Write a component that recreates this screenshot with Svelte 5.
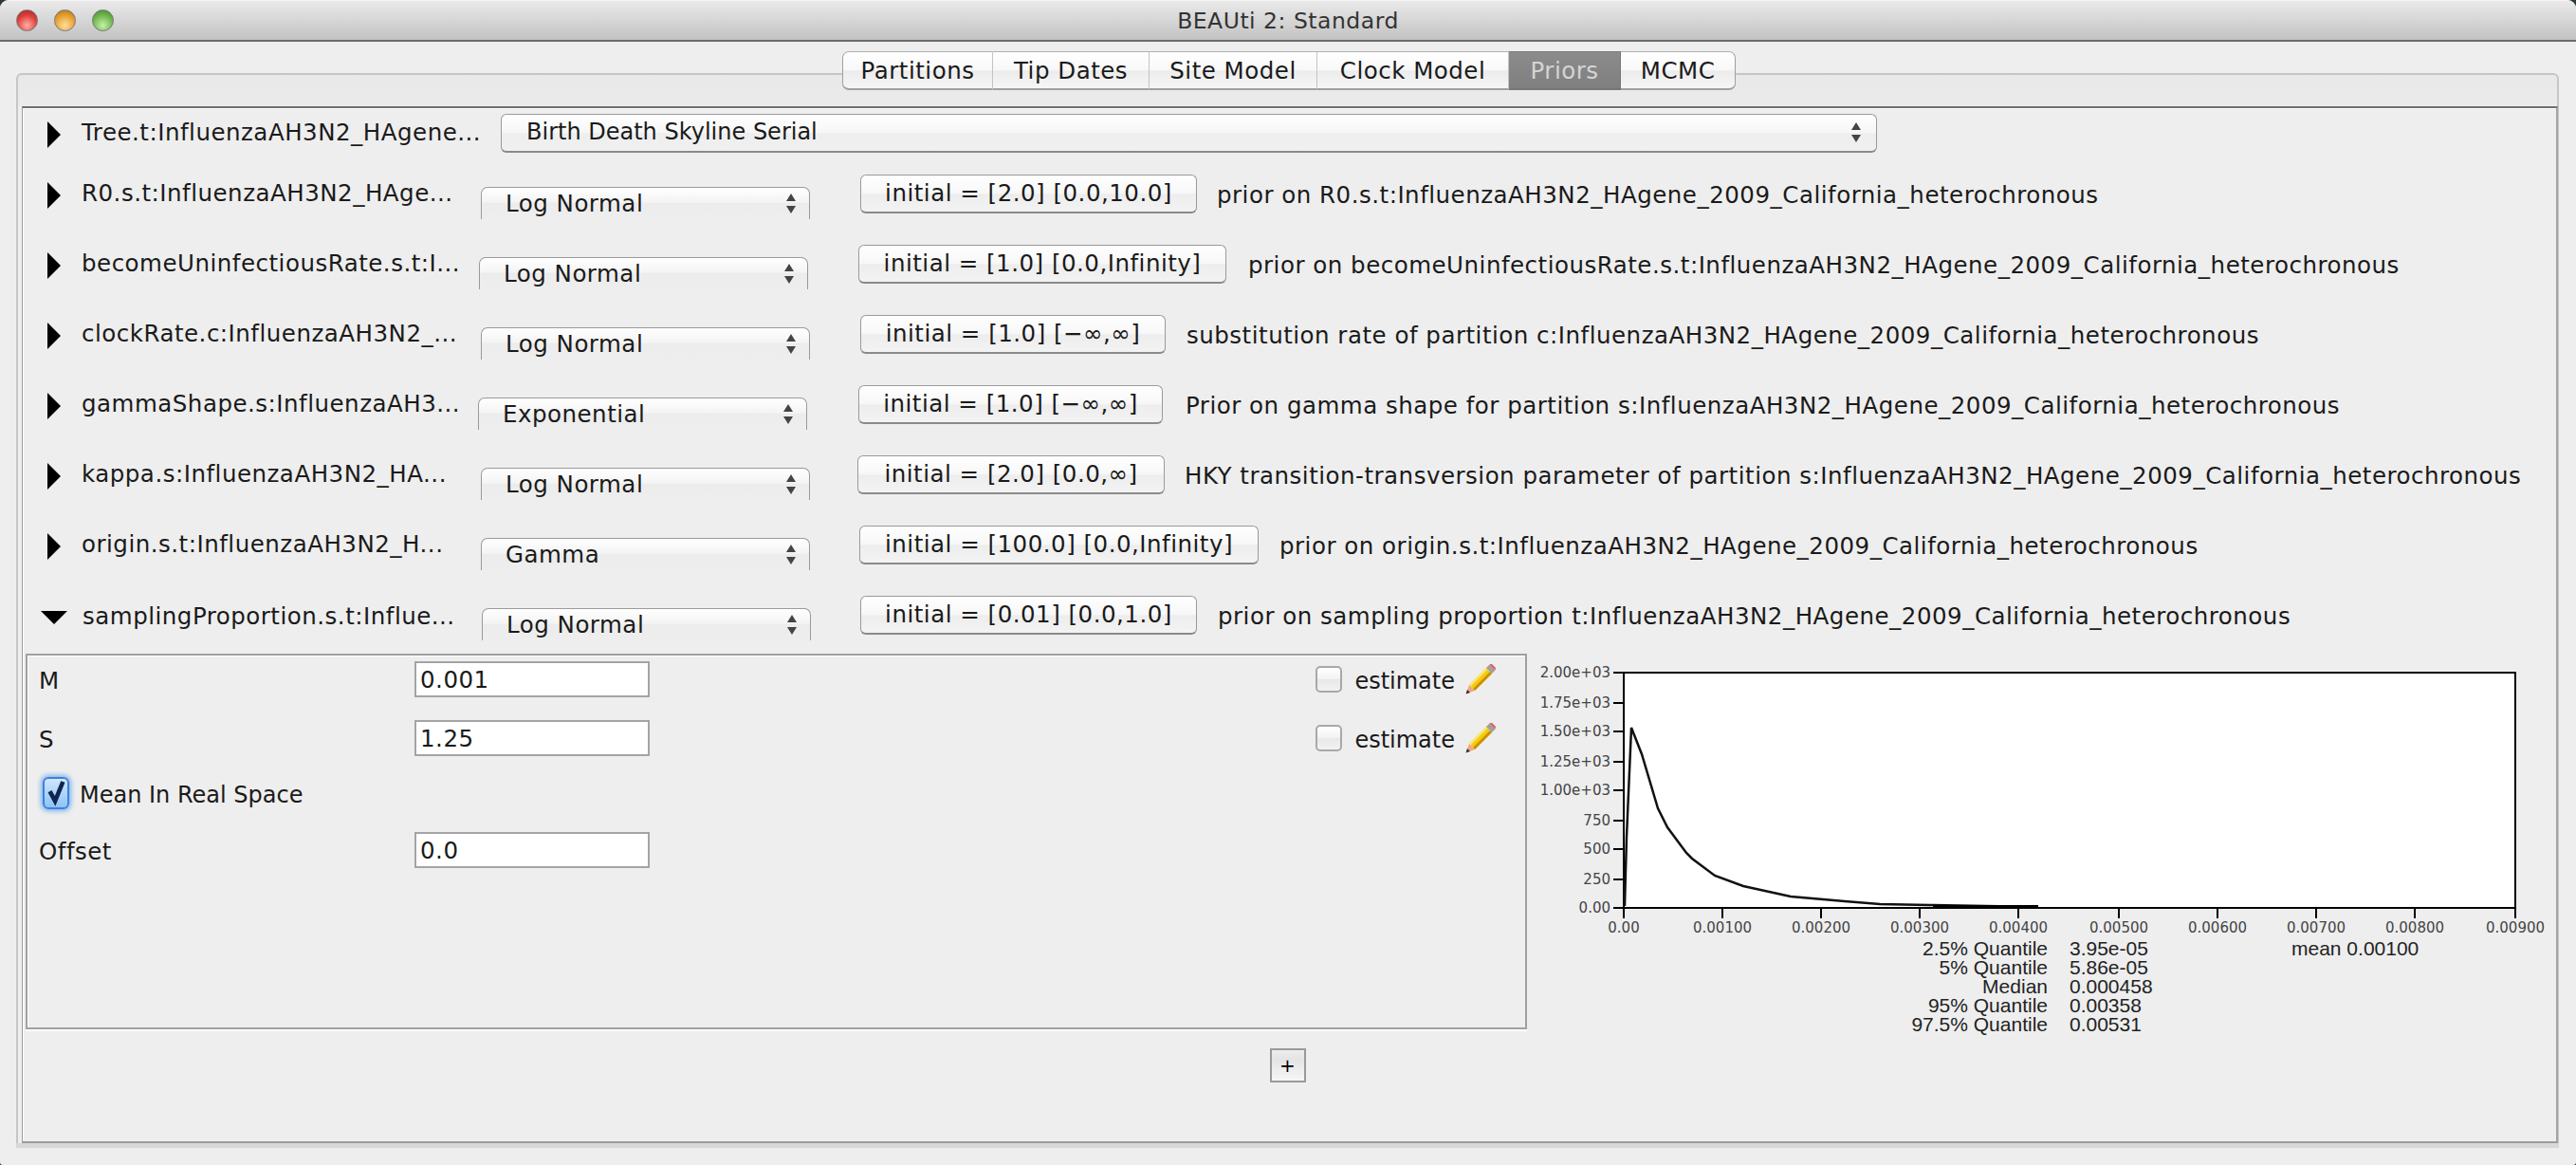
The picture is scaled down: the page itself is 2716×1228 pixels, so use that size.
<script lang="ts">
    const tabs = [
        { label: 'Partitions', width: 159 },
        { label: 'Tip Dates', width: 165 },
        { label: 'Site Model', width: 177 },
        { label: 'Clock Model', width: 202 },
        { label: 'Priors', width: 118, active: true },
        { label: 'MCMC', width: 121 }
    ]

    const suffix = 'InfluenzaAH3N2_HAgene_2009_California_heterochronous'

    // comboX / btnX are where the Java layout happened to put each control
    const rows = [
        { name: 'R0.s.t:InfluenzaAH3N2_HAge...', dist: 'Log Normal', comboX: 507, btnX: 907, btnW: 355, init: 'initial = [2.0] [0.0,10.0]', descX: 1283, desc: `prior on R0.s.t:${suffix}` },
        { name: 'becomeUninfectiousRate.s.t:I...', dist: 'Log Normal', comboX: 505, btnX: 905, btnW: 388, init: 'initial = [1.0] [0.0,Infinity]', descX: 1316, desc: `prior on becomeUninfectiousRate.s.t:${suffix}` },
        { name: 'clockRate.c:InfluenzaAH3N2_...', dist: 'Log Normal', comboX: 507, btnX: 907, btnW: 322, init: 'initial = [1.0] [−∞,∞]', descX: 1251, desc: `substitution rate of partition c:${suffix}` },
        { name: 'gammaShape.s:InfluenzaAH3...', dist: 'Exponential', comboX: 504, btnX: 905, btnW: 321, init: 'initial = [1.0] [−∞,∞]', descX: 1250, desc: `Prior on gamma shape for partition s:${suffix}` },
        { name: 'kappa.s:InfluenzaAH3N2_HA...', dist: 'Log Normal', comboX: 507, btnX: 904, btnW: 324, init: 'initial = [2.0] [0.0,∞]', descX: 1249, desc: `HKY transition-transversion parameter of partition s:${suffix}` },
        { name: 'origin.s.t:InfluenzaAH3N2_H...', dist: 'Gamma', comboX: 507, btnX: 906, btnW: 421, init: 'initial = [100.0] [0.0,Infinity]', descX: 1349, desc: `prior on origin.s.t:${suffix}` },
        { name: 'samplingProportion.s.t:Influe...', dist: 'Log Normal', comboX: 507, btnX: 906, btnW: 355, init: 'initial = [0.01] [0.0,1.0]', descX: 1283, desc: `prior on sampling proportion t:${suffix}`, open: true }
    ]

    const yTicks = [
        { y: 707, t: '2.00e+03' }, { y: 739, t: '1.75e+03' }, { y: 769, t: '1.50e+03' },
        { y: 801, t: '1.25e+03' }, { y: 831, t: '1.00e+03' }, { y: 863, t: '750' },
        { y: 893, t: '500' }, { y: 925, t: '250' }, { y: 955, t: '0.00' }
    ]
    const xTicks = [
        { x: 1711, t: '0.00' }, { x: 1815, t: '0.00100' }, { x: 1919, t: '0.00200' },
        { x: 2023, t: '0.00300' }, { x: 2127, t: '0.00400' }, { x: 2233, t: '0.00500' },
        { x: 2337, t: '0.00600' }, { x: 2441, t: '0.00700' }, { x: 2545, t: '0.00800' },
        { x: 2651, t: '0.00900' }
    ]
    const stats = [
        ['2.5% Quantile', '3.95e-05'],
        ['5% Quantile', '5.86e-05'],
        ['Median', '0.000458'],
        ['95% Quantile', '0.00358'],
        ['97.5% Quantile', '0.00531']
    ]
    const curve = '1712,953 1714,880 1719,765 1730,793 1747,850 1757,870 1777,897 1783,903 1807,921 1837,932 1887,943 1944,948 1981,951 2037,952 2148,954'
</script>

{#snippet arrows()}
    <span class="updown"><i class="up"></i><i class="down"></i></span>
{/snippet}

{#snippet pencil()}
    <svg class="pencil" width="32" height="32" viewBox="0 0 32 32">
        <path d="M4 22 L22 4 L28 10 L10 28 Z" fill="#f5cb10" />
        <path d="M8 26 L26 8 L28 10 L10 28 Z" fill="#c98f08" />
        <path d="M4 22 L22 4 L23.5 5.5 L5.5 23.5 Z" fill="#fbe76e" />
        <path d="M22 4 L25.5 0.5 L31.5 6.5 L28 10 Z" fill="#a0a0a0" />
        <path d="M25.5 0.5 L27.5 -0.5 L32 4 L31.5 6.5 Z" fill="#e2585c" />
        <path d="M4 22 L10 28 L0.5 31.5 Z" fill="#f0a884" />
        <path d="M2 27 L5 30 L0.5 31.5 Z" fill="#333" />
    </svg>
{/snippet}

<div class="window">
    <header class="titlebar">
        <div class="lights">
            <span class="light red"></span>
            <span class="light amber"></span>
            <span class="light green"></span>
        </div>
        <div class="title">BEAUti 2: Standard</div>
    </header>

    <main class="tabpane">
        <nav class="tabs">
            {#each tabs as tab}
                <div class="tab" class:active={tab.active} style="width:{tab.width}px">{tab.label}</div>
            {/each}
        </nav>

        <section class="content">
            <div class="treeRow">
                <span class="tri right"></span>
                <span class="name treeName">Tree.t:InfluenzaAH3N2_HAgene...</span>
                <div class="treeCombo">
                    <span>Birth Death Skyline Serial</span>
                    {@render arrows()}
                </div>
            </div>

            {#each rows as row}
                <div class="row" class:open={row.open}>
                    <span class="tri" class:right={!row.open} class:down={row.open}></span>
                    <span class="name" style="width:{row.comboX - 86}px">{row.name}</span>
                    <div class="combo">
                        <span>{row.dist}</span>
                        {@render arrows()}
                    </div>
                    <button type="button" class="init" style="margin-left:{row.btnX - row.comboX - 347}px;width:{row.btnW}px">{row.init}</button>
                    <span class="desc" style="margin-left:{row.descX - row.btnX - row.btnW}px">{row.desc}</span>
                </div>
            {/each}

            <div class="detail">
                <div class="panel">
                    <div class="field">
                        <label for="m">M</label>
                        <input id="m" value="0.001" readonly />
                        <div class="estimate">
                            <span class="box"></span>
                            <span class="estLabel">estimate</span>
                            {@render pencil()}
                        </div>
                    </div>
                    <div class="field s">
                        <label for="s">S</label>
                        <input id="s" value="1.25" readonly />
                        <div class="estimate">
                            <span class="box"></span>
                            <span class="estLabel">estimate</span>
                            {@render pencil()}
                        </div>
                    </div>
                    <div class="field check">
                        <span class="checked">
                            <svg width="26" height="30" viewBox="0 0 26 30">
                                <path d="M6 13 L12 24 L21 2" fill="none" stroke="#10264e" stroke-width="5" />
                            </svg>
                        </span>
                        <span class="checkLabel">Mean In Real Space</span>
                    </div>
                    <div class="field">
                        <label for="o">Offset</label>
                        <input id="o" value="0.0" readonly />
                    </div>
                </div>

                <svg class="chart" width="1084" height="415" viewBox="1611 687 1084 415">
                    <rect x="1711" y="707" width="940" height="248" fill="#fff" stroke="#000" stroke-width="2" />
                    <polyline points={curve} fill="none" stroke="#111" stroke-width="2.5" />
                    <polyline points="2037,953.5 2148,953.5" fill="none" stroke="#000" stroke-width="3" />
                    {#each yTicks as tick}
                        <line x1="1700" x2="1711" y1={tick.y} y2={tick.y} stroke="#000" stroke-width="2" />
                        <text class="tick" x="1697" y={tick.y + 5} text-anchor="end">{tick.t}</text>
                    {/each}
                    {#each xTicks as tick}
                        <line x1={tick.x} x2={tick.x} y1="955" y2="966" stroke="#000" stroke-width="2" />
                        <text class="tick" x={tick.x} y="981" text-anchor="middle">{tick.t}</text>
                    {/each}
                    {#each stats as stat, i}
                        <text class="stat" x="2158" y={1005 + i * 20} text-anchor="end">{stat[0]}</text>
                        <text class="stat" x="2181" y={1005 + i * 20}>{stat[1]}</text>
                    {/each}
                    <text class="stat" x="2415" y="1005">mean 0.00100</text>
                </svg>
            </div>

            <div class="addRow">
                <button type="button" class="add">+</button>
            </div>
        </section>
    </main>
</div>

<style>
    :global(body) {
        background: #2c3a40;
    }
    .window {
        height: 1228px;
        display: flex;
        flex-direction: column;
        background: #eee;
        border-radius: 9px 9px 3px 3px;
        overflow: hidden;
        font-family: 'DejaVu Sans', 'Noto Sans', sans-serif;
        font-size: 24.5px;
        letter-spacing: 0.5px;
        color: #1a1a1a;
    }
    .titlebar {
        height: 41px;
        flex: none;
        position: relative;
        display: flex;
        align-items: center;
        justify-content: center;
        background: linear-gradient(#eaeaea, #c2c2c2);
        border-top: 1px solid #f4f4f4;
        border-bottom: 2px solid #6c6c6c;
    }
    .lights {
        position: absolute;
        left: 17px;
        top: 9px;
        display: flex;
        gap: 17px;
    }
    .light {
        width: 23px;
        height: 23px;
        border-radius: 50%;
        border: 1px solid #777;
        box-sizing: border-box;
    }
    .red {
        background: radial-gradient(circle at 50% 75%, #ffb0a8, #e0403c 55%, #a02020);
    }
    .amber {
        background: radial-gradient(circle at 50% 75%, #ffe0a0, #e8a030 55%, #a87010);
    }
    .green {
        background: radial-gradient(circle at 50% 75%, #c8f0a8, #70b850 55%, #408030);
    }
    .title {
        color: #333;
        font-size: 23.5px;
    }
    .tabpane {
        margin: 33px 18px 23px 17px;
        flex: 1;
        display: flex;
        flex-direction: column;
        border: 2px solid #c6c6c6;
        border-bottom: none;
        border-radius: 6px 6px 0 0;
        background: linear-gradient(#e8e8e8, #ebebeb 33px, #eee 34px);
        box-sizing: border-box;
        box-shadow: 0 5px 0 #d8d8d8;
    }
    .tabs {
        display: flex;
        height: 41px;
        margin: -25px 0 0 869px;
    }
    .tab {
        box-sizing: border-box;
        height: 41px;
        display: flex;
        align-items: center;
        justify-content: center;
        background: linear-gradient(#fff, #f8f8f8 50%, #ececec 52%, #f6f6f6);
        border-top: 1px solid #b0b0b0;
        border-bottom: 2px solid #a0a0a0;
        border-right: 1px solid #c4c4c4;
        color: #1a1a1a;
    }
    .tab:first-child {
        border-left: 1px solid #a0a0a0;
        border-radius: 7px 0 0 7px;
    }
    .tab:last-child {
        border-right: 1px solid #a0a0a0;
        border-radius: 0 7px 7px 0;
    }
    .tab.active {
        background: linear-gradient(#8c8c8c, #7f7f7f);
        color: #d4d4d4;
        border-color: #777;
    }
    .content {
        flex: 1;
        margin: 17px -1px 0 4px;
        display: flex;
        flex-direction: column;
        border-top: 2px solid #6e6e6e;
        border-left: 1px solid #9c9c9c;
        border-right: 2px solid #a4a4a4;
        border-bottom: 2px solid #9c9c9c;
        box-shadow: inset 0 1px 0 #fff, inset 1px 0 0 #fff;
        background: #eee;
    }
    .treeRow {
        height: 66px;
        flex: none;
        display: flex;
        align-items: flex-start;
    }
    .tri {
        flex: none;
        width: 0;
        height: 0;
    }
    .tri.right {
        margin-left: 26px;
        border-left: 14px solid #000;
        border-top: 14px solid transparent;
        border-bottom: 14px solid transparent;
    }
    .tri.down {
        margin: 20px 0 0 19px;
        border-top: 14px solid #000;
        border-left: 14px solid transparent;
        border-right: 14px solid transparent;
    }
    .treeRow .tri {
        margin-top: 14px;
    }
    .row .tri.right {
        margin-top: 12px;
    }
    .name {
        flex: none;
        margin-left: 22px;
        white-space: nowrap;
        line-height: 32px;
        margin-top: 8px;
    }
    .treeName {
        width: 442px;
        margin-top: 10px;
    }
    .row.open .name {
        margin-left: 16px;
        margin-top: 10px;
    }
    .treeCombo {
        box-sizing: border-box;
        width: 1451px;
        height: 41px;
        margin-top: 6px;
        padding: 0 16px 2px 26px;
        display: flex;
        align-items: center;
        justify-content: space-between;
        font-size: 24px;
        letter-spacing: 0;
        background: linear-gradient(#fff, #f6f6f6 50%, #eee 52%, #f0f0f0);
        border: 1px solid #9a9a9a;
        border-bottom: 2px solid #8a8a8a;
        border-radius: 6px;
    }
    .row {
        height: 74px;
        flex: none;
        display: flex;
        align-items: flex-start;
    }
    .row.open {
        height: 65px;
    }
    .combo {
        box-sizing: border-box;
        flex: none;
        width: 347px;
        height: 34px;
        margin-top: 17px;
        padding: 0 14px 0 25px;
        display: flex;
        align-items: center;
        justify-content: space-between;
        background: linear-gradient(#fff, #f4f4f4 45%, #ececec 50%, #eee);
        border: 1px solid #9a9a9a;
        border-bottom: none;
        border-radius: 7px 7px 0 0;
    }
    .updown {
        display: flex;
        flex-direction: column;
        gap: 5px;
    }
    .updown i {
        width: 0;
        height: 0;
        border-left: 5px solid transparent;
        border-right: 5px solid transparent;
    }
    .updown .up {
        border-bottom: 8px solid #444;
    }
    .updown .down {
        border-top: 8px solid #444;
    }
    .init {
        box-sizing: border-box;
        flex: none;
        height: 41px;
        margin-top: 4px;
        padding: 0 0 2px;
        font: inherit;
        letter-spacing: inherit;
        color: #1a1a1a;
        background: linear-gradient(#fff, #f7f7f7 50%, #ededed 52%, #f3f3f3);
        border: 1px solid #9a9a9a;
        border-bottom: 2px solid #8a8a8a;
        border-radius: 6px;
    }
    .desc {
        white-space: nowrap;
        line-height: 32px;
        margin-top: 10px;
    }
    .detail {
        display: flex;
        align-items: flex-start;
        height: 416px;
        flex: none;
    }
    .panel {
        box-sizing: border-box;
        flex: none;
        width: 1583px;
        height: 396px;
        margin-left: 3px;
        padding: 6px 31px 0 12px;
        border: 2px solid #a0a0a0;
        box-shadow: inset 1px 1px 0 #fff, 0 2px 0 #fff;
    }
    .field {
        height: 38px;
        display: flex;
        align-items: center;
    }
    .field + .field {
        margin-top: 22px;
    }
    .field.s {
        margin-top: 24px;
    }
    .field.check {
        margin-top: 20px;
    }
    .field label {
        width: 396px;
        flex: none;
        padding-top: 3px;
    }
    .checkLabel {
        padding-top: 3px;
        letter-spacing: 0;
        font-size: 24px;
    }
    .field input {
        box-sizing: border-box;
        width: 248px;
        height: 38px;
        padding: 0 4px;
        font: inherit;
        letter-spacing: inherit;
        color: #1a1a1a;
        background: #fff;
        border: 2px solid #a4a4a4;
        border-radius: 0;
        outline: none;
    }
    .checked {
        box-sizing: border-box;
        flex: none;
        width: 28px;
        height: 34px;
        margin: 0 11px 0 4px;
        display: flex;
        align-items: center;
        justify-content: center;
        background: linear-gradient(#cfe6fc, #8fc3f6);
        border: 2px solid #3d82d8;
        border-radius: 6px;
        box-shadow: 0 0 5px 2px #7fb4f0;
    }
    .estimate {
        margin-left: auto;
        display: flex;
        align-items: center;
    }
    .estLabel {
        padding-top: 4px;
        font-size: 24px;
        letter-spacing: 0;
    }
    .box {
        box-sizing: border-box;
        width: 28px;
        height: 28px;
        margin-right: 13px;
        background: linear-gradient(#fff, #f2f2f2 50%, #e8e8e8 52%, #f2f2f2);
        border: 2px solid #a8a8a8;
        border-radius: 5px;
    }
    .pencil {
        margin-left: 11px;
    }
    .chart {
        flex: none;
        margin-left: 2px;
        overflow: visible;
    }
    .tick {
        font-family: 'DejaVu Sans', sans-serif;
        font-size: 15px;
        letter-spacing: 0;
        fill: #444;
    }
    .stat {
        font-family: 'Liberation Sans', sans-serif;
        font-size: 21px;
        letter-spacing: 0;
        fill: #222;
    }
    .addRow {
        display: flex;
        justify-content: center;
        padding-right: 4px;
    }
    .add {
        box-sizing: border-box;
        width: 38px;
        height: 36px;
        padding: 0;
        font: inherit;
        font-size: 20px;
        line-height: 1;
        background: linear-gradient(#eee, #e4e4e4 30%, #f6f6f6);
        border: 2px solid #9a9a9a;
        border-radius: 0;
    }
</style>
